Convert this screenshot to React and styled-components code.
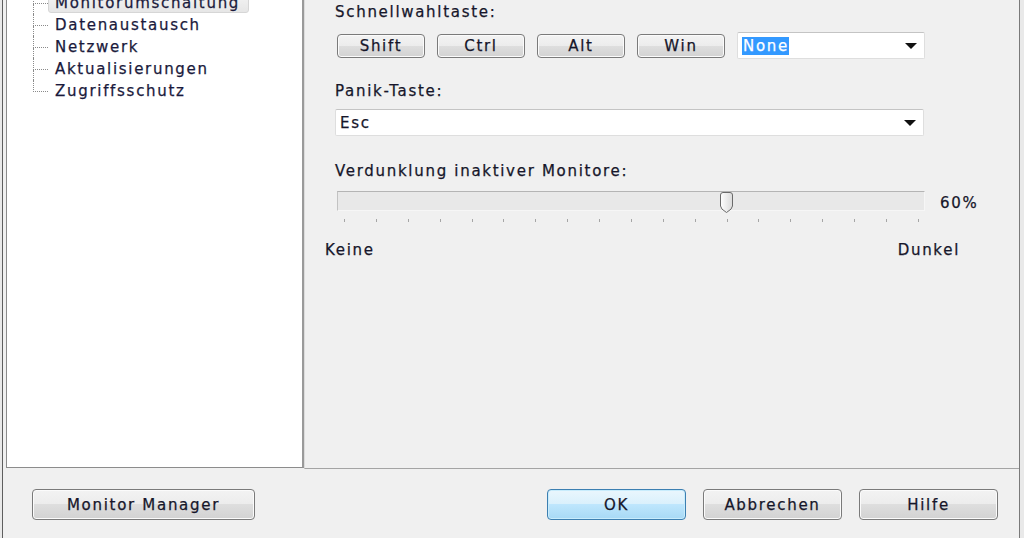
import styled, { createGlobalStyle } from "styled-components"

const Global = createGlobalStyle`
    html, body {
        margin: 0;
        padding: 0;
        background: #e9e9e9;
        overflow: hidden;
    }
    body {
        font-family: "DejaVu Sans", Verdana, sans-serif;
        font-size: 15px;
        letter-spacing: 1.7px;
        color: #16162a;
        -webkit-text-stroke: 0.25px currentColor;
    }
`

const Window = styled.div`
    box-sizing: border-box;
    width: 1018px;
    height: 538px;
    margin-left: 2px;
    border-left: 1px solid #5e5e5e;
    border-right: 1px solid #7a7a7a;
    background: #f0f0f0;
    display: flex;
    flex-direction: column;
    overflow: hidden;
`

const Main = styled.div`
    display: flex;
    align-items: flex-start;
    padding-left: 3px;
    height: 469px;
`

const TreePanel = styled.div`
    box-sizing: border-box;
    width: 298px;
    height: 468px;
    background: #fff;
    border: 1px solid #8c8c8c;
    border-top: none;
    border-right: 2px solid #9a9a9a;
    overflow: hidden;
`

const TreeList = styled.ul`
    list-style: none;
    margin: -8px 0 0 0;
    padding: 0 0 0 26px;
`

const TreeItem = styled.li`
    display: flex;
    height: 22px;
    color: #1a1a3c;
`

const Guide = styled.span`
    display: flex;
    flex-direction: column;
    width: 15px;
    flex-shrink: 0;
`

const GuideTop = styled.span`
    height: 11px;
    border-left: 1px dotted #8a8a8a;
    border-bottom: 1px dotted #8a8a8a;
`

const GuideBottom = styled.span`
    flex: 1;
    border-left: 1px dotted ${p => (p.$last ? "transparent" : "#8a8a8a")};
`

const TreeLabel = styled.span`
    box-sizing: border-box;
    align-self: center;
    height: 20px;
    line-height: 18px;
    padding: 0 8px 0 6px;
    border: 1px solid ${p => (p.$selected ? "#d6d6d6" : "transparent")};
    border-radius: 3px;
    background: ${p => (p.$selected ? "linear-gradient(#f4f4f4, #e6e6e6)" : "transparent")};
    white-space: nowrap;
`

const Page = styled.div`
    box-sizing: border-box;
    flex: 1;
    height: 469px;
    border-left: 1px solid #dcdcdc;
    border-bottom: 1px solid #a4a4a4;
    padding: 3px 0 0 30px;
    display: flex;
    flex-direction: column;
`

const Label = styled.div`
    line-height: 18px;
    height: 18px;
    margin-top: ${p => p.$gap || 0}px;
    white-space: nowrap;
`

const KeyRow = styled.div`
    display: flex;
    align-items: center;
    gap: 12px;
    margin-top: 11px;
    padding-left: 2px;
    height: 27px;
`

const Button = styled.button`
    box-sizing: border-box;
    width: ${p => p.$w || 88}px;
    height: ${p => p.$h || 24}px;
    padding: 0;
    font: inherit;
    letter-spacing: inherit;
    color: #16162a;
    border: 1px solid ${p => (p.$default ? "#3c7fb1" : "#7a7a7a")};
    border-radius: 4px;
    box-shadow: inset 0 0 0 1px ${p => (p.$default ? "#c8ecfc" : "#fbfbfb")};
    background: ${p =>
        p.$default
            ? "linear-gradient(#eaf6fd 0%, #d9f0fc 50%, #bee6fd 50%, #a7d9f5 100%)"
            : "linear-gradient(#f3f3f3 0%, #ececec 50%, #dedede 50%, #d2d2d2 100%)"};
    flex-shrink: 0;
`

const Combo = styled.div`
    box-sizing: border-box;
    display: flex;
    align-items: center;
    width: ${p => p.$w}px;
    height: 27px;
    margin-top: ${p => p.$gap || 0}px;
    padding: 0 7px 0 4px;
    background: #fff;
    border: 1px solid #dedede;
    border-top-color: #c4c4c4;
    border-radius: 2px;
`

const ComboText = styled.span`
    flex: 1;
    display: flex;
    align-items: center;
`

const Selected = styled.span`
    background: #3399ff;
    color: #fff;
    line-height: 18px;
    padding: 0 0 0 1px;
`

const Arrow = styled.span`
    width: 0;
    height: 0;
    border-left: 6px solid transparent;
    border-right: 6px solid transparent;
    border-top: 6px solid #111;
`

const SliderRow = styled.div`
    display: flex;
    align-items: center;
    margin-top: 10px;
    padding-left: 2px;
`

const Track = styled.div`
    box-sizing: border-box;
    position: relative;
    width: 588px;
    height: 20px;
    background: #e8e8e8;
    border-top: 1px solid #b4b4b4;
    border-left: 1px solid #c2c2c2;
    border-right: 1px solid #f6f6f6;
    border-bottom: 1px solid #f6f6f6;
`

const Thumb = styled.svg`
    position: absolute;
    top: 0;
    width: 15px;
    height: 21px;
`

const Value = styled.span`
    margin-left: 15px;
    padding-top: 4px;
`

const Ticks = styled.div`
    box-sizing: border-box;
    display: flex;
    justify-content: space-between;
    width: 588px;
    margin: 7px 0 0 2px;
    padding: 0 6px 0 7px;
`

const Tick = styled.span`
    width: 1px;
    height: 3px;
    background: #a6a6a6;
`

const Scale = styled.div`
    display: flex;
    justify-content: space-between;
    width: 635px;
    margin: 19px 0 0 -10px;
    line-height: 18px;
`

const Footer = styled.div`
    display: flex;
    align-items: flex-start;
    padding: 20px 21px 0 29px;
    flex: 1;
`

const FooterRight = styled.div`
    display: flex;
    gap: 17px;
    margin-left: auto;
`

const treeItems = ["Monitorumschaltung", "Datenaustausch", "Netzwerk", "Aktualisierungen", "Zugriffsschutz"]

export default function App() {
    const value = 60
    const max = 90
    const thumbLeft = 7 + (value / max) * 574 - 1 - 7.5

    return (
        <>
            <Global />
            <Window>
                <Main>
                    <TreePanel>
                        <TreeList>
                            {treeItems.map((item, i) => (
                                <TreeItem key={item}>
                                    <Guide>
                                        <GuideTop />
                                        <GuideBottom $last={i === treeItems.length - 1} />
                                    </Guide>
                                    <TreeLabel $selected={i === 0}>{item}</TreeLabel>
                                </TreeItem>
                            ))}
                        </TreeList>
                    </TreePanel>
                    <Page>
                        <Label>Schnellwahltaste:</Label>
                        <KeyRow>
                            <Button>Shift</Button>
                            <Button>Ctrl</Button>
                            <Button>Alt</Button>
                            <Button>Win</Button>
                            <Combo $w={188}>
                                <ComboText><Selected>None</Selected></ComboText>
                                <Arrow />
                            </Combo>
                        </KeyRow>
                        <Label $gap={23}>Panik-Taste:</Label>
                        <Combo $w={589} $gap={9}>
                            <ComboText>Esc</ComboText>
                            <Arrow />
                        </Combo>
                        <Label $gap={26}>Verdunklung inaktiver Monitore:</Label>
                        <SliderRow>
                            <Track>
                                <Thumb viewBox="0 0 15 21" style={{ left: thumbLeft }}>
                                    <defs>
                                        <linearGradient id="thumbFill" x1="0" y1="0" x2="1" y2="0">
                                            <stop offset="0" stopColor="#ffffff" />
                                            <stop offset="1" stopColor="#dadada" />
                                        </linearGradient>
                                    </defs>
                                    <path
                                        d="M1.5 3 Q1.5 0.5 4 0.5 H11 Q13.5 0.5 13.5 3 V14 Q13.5 17 7.5 20.5 Q1.5 17 1.5 14 Z"
                                        fill="url(#thumbFill)"
                                        stroke="#6a6a6a"
                                        strokeWidth="1"
                                    />
                                </Thumb>
                            </Track>
                            <Value>{value}%</Value>
                        </SliderRow>
                        <Ticks>
                            {Array.from({ length: 19 }, (_, i) => (
                                <Tick key={i} />
                            ))}
                        </Ticks>
                        <Scale>
                            <span>Keine</span>
                            <span>Dunkel</span>
                        </Scale>
                    </Page>
                </Main>
                <Footer>
                    <Button $w={223} $h={31}>Monitor Manager</Button>
                    <FooterRight>
                        <Button $w={139} $h={31} $default>OK</Button>
                        <Button $w={139} $h={31}>Abbrechen</Button>
                        <Button $w={139} $h={31}>Hilfe</Button>
                    </FooterRight>
                </Footer>
            </Window>
        </>
    )
}
